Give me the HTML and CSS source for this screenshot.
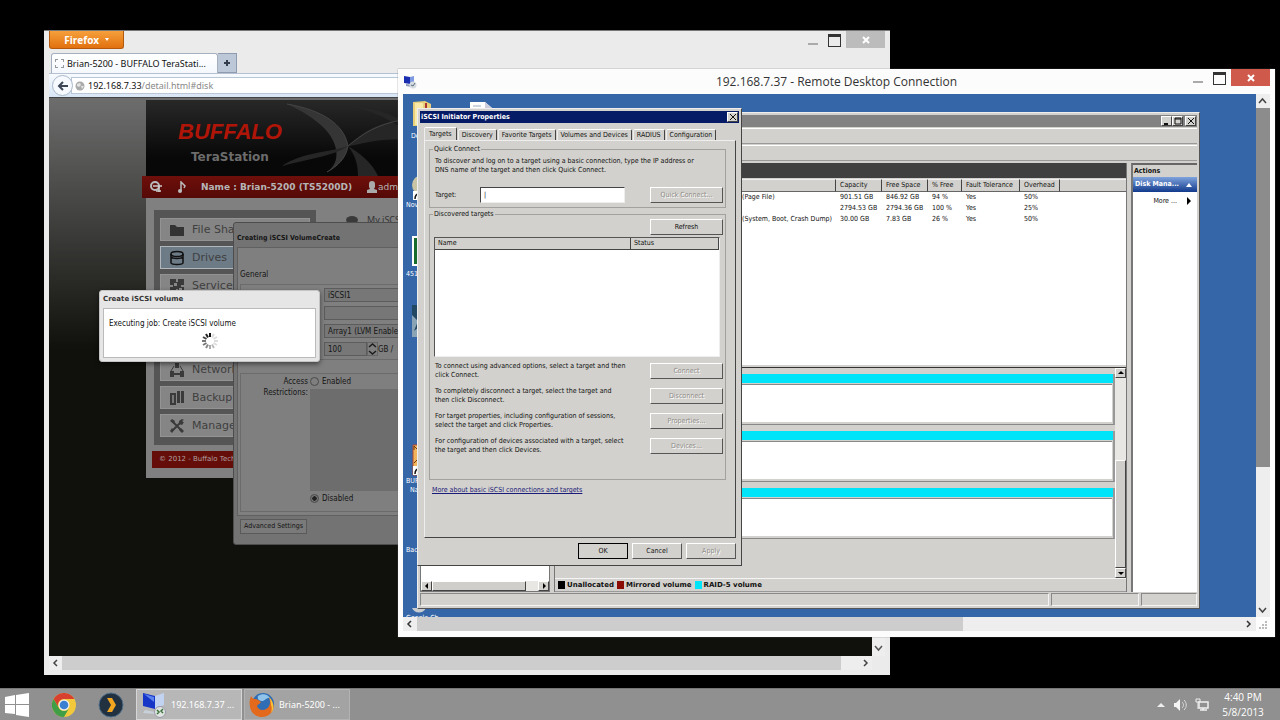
FILE: index.html
```html
<!DOCTYPE html>
<html lang="en">
<head>
    <meta charset="UTF-8">
    <title>Desktop</title>
    <link rel="stylesheet" href="styles.css">
</head>
<body>

<div class="desktop">

    <!-- firefox -->
    <div class="window firefox">
        <div class="ff_title">
            <button class="ff_menu">Firefox <span class="caret"></span></button>
            <div class="ff_controls">
                <button class="ctl ctl_min" aria-label="Minimize"></button>
                <button class="ctl ctl_max" aria-label="Maximize"></button>
                <button class="ctl ctl_close ctl_close_grey" aria-label="Close">
                    <svg width="8" height="8" viewBox="0 0 8 8"><path d="M1 1l6 6M7 1l-6 6" stroke="#fff" stroke-width="2"/></svg>
                </button>
            </div>
        </div>
        <div class="ff_tabs">
            <div class="ff_tab"><i class="ff_favicon"></i>Brian-5200 - BUFFALO TeraStati...</div>
            <button class="ff_newtab" aria-label="New tab">
                <svg width="8" height="8" viewBox="0 0 8 8"><path d="M4 1v6M1 4h6" stroke="#333c4c" stroke-width="2"/></svg>
            </button>
        </div>
        <div class="ff_nav">
            <button class="ff_back" aria-label="Back">
                <svg width="12" height="12" viewBox="0 0 12 12"><path d="M6 2L2 6l4 4M2 6h9" fill="none" stroke="#3c4656" stroke-width="2"/></svg>
            </button>
            <div class="ff_url">
                <svg width="10" height="10" viewBox="0 0 10 10"><circle cx="5" cy="5" r="4.500" fill="#aaa"/><path d="M2 3l3-1 1 2-2 2-2-1zM6 5l3 0-2 3z" fill="#e4e4e4"/></svg>
                <span>192.168.7.33<em>/detail.html#disk</em></span>
            </div>
        </div>

        <div class="ff_view">
            <div class="page">
                <div class="site">
                    <div class="site_head">
                        <svg class="site_swoosh" viewBox="0 0 120 76" preserveAspectRatio="none">
                            <path d="M5 4C40 10 62 24 66 46C64 58 56 66 45 72C60 62 56 42 42 28C32 18 18 10 5 4z" fill="#353535"/>
                            <path d="M66 46C80 34 90 24 120 20V40C98 38 82 44 66 46zM66 46C50 52 20 52 0 66C30 58 52 56 66 46zM60 5C90 10 104 18 120 28V20C100 10 80 6 60 5zM66 46C76 52 90 62 96 76H76C76 62 72 54 66 46z" fill="#262626"/>
                            <path d="M5 4C40 10 62 24 66 46C64 58 56 66 45 72M66 46C80 34 96 24 120 20" fill="none" stroke="#444"/>
                        </svg>
                        <div class="site_logo">BUFFALO</div>
                        <div class="site_model">TeraStation</div>
                    </div>
                    <div class="site_bar">
                        <svg width="14" height="12" viewBox="0 0 14 12"><circle cx="6" cy="5" r="4" fill="none" stroke="#bbb" stroke-width="2"/><path d="M4 5h9M10 5v6M7 10h5" stroke="#ccc" stroke-width="1.500"/></svg>
                        <svg width="10" height="12" viewBox="0 0 10 12"><path d="M4 10V1l4 4-1 2" fill="none" stroke="#bbb" stroke-width="1.500"/><circle cx="3" cy="10" r="2" fill="#bbb"/></svg>
                        <b>Name : Brian-5200 (TS5200D)</b>
                        <span class="site_user"><svg width="12" height="12" viewBox="0 0 12 12"><path d="M3 3a3 3 0 0 1 6 0v3l-1 2 3 1v3H1V9l3-1-1-2z" fill="#aaa"/></svg>admin</span>
                    </div>
                    <div class="site_body">
                        <div class="site_cols">
                            <div class="side">
                                <a href="#" class="side_item"><svg class="side_icon" viewBox="0 0 16 16"><path d="M1 3h5l2 2h7v9H1z" fill="#333"/></svg>File Sharing</a>
                                <a href="#" class="side_item current"><svg class="side_icon" viewBox="0 0 16 16"><g fill="none" stroke="#111" stroke-width="1.500"><ellipse cx="8" cy="4" rx="6" ry="2.500"/><path d="M2 4v9c1 2 11 2 12 0V4M2 7c2 2 10 2 12 0"/></g></svg>Drives</a>
                                <a href="#" class="side_item"><svg class="side_icon" viewBox="0 0 16 16"><path d="M1 1h6v3h2V1h6v6h-3v2h3v6H9v-4H7v4H1V9h3V7H1z" fill="#3a3a3a"/><path d="M5 5h3v3H5zM10 10h3v2h-3z" fill="#888"/></svg>Services</a>
                                <a href="#" class="side_item">Applications</a>
                                <a href="#" class="side_item">System</a>
                                <a href="#" class="side_item"><svg class="side_icon" viewBox="0 0 16 16"><path d="M6 1h4v5H6zM1 9h4v6H1zM11 9h4v6h-4zM5 11h6v2H5z" fill="#3a3a3a"/><path d="M5 4L2 9M11 4l3 5" stroke="#3a3a3a"/></svg>Network</a>
                                <a href="#" class="side_item"><svg class="side_icon" viewBox="0 0 16 16"><path d="M1 3h6v12H1zM8 1h3v12H8zM12 1h3v12h-3z" fill="#3a3a3a"/><path d="M3 5h2v8H3z" fill="#777"/></svg>Backup</a>
                                <a href="#" class="side_item"><svg class="side_icon" viewBox="0 0 16 16"><path d="M3 3l10 10M13 3L3 13" stroke="#3a3a3a" stroke-width="2"/><path d="M1 3l2-2 3 2-1 3zM10 3l3-2 2 1-2 1 1 1 1 0-2 3-3-1zM10 12l2-2 3 3-2 2zM1 13l2-3 2 2-2 3z" fill="#3a3a3a"/></svg>Management</a>
                            </div>
                            <div class="site_main"><svg width="14" height="10" viewBox="0 0 14 10"><ellipse cx="7" cy="5" rx="6" ry="4" fill="#3a3a3a"/></svg>My iSCSI</div>
                        </div>
                        <div class="site_foot">© 2012 - Buffalo Technology</div>
                    </div>
                </div>

                <form class="volume">
                    <div class="volume_title">Creating iSCSI VolumeCreate</div>
                    <div class="volume_body">
                        <div class="volume_general">General</div>
                        <div class="volume_set volume_fields">
                            <input type="text" class="vfield" value="iSCSI1" aria-label="Name">
                            <input type="text" class="vfield" aria-label="Description">
                            <select class="vfield" aria-label="Volume"><option>Array1 (LVM Enabled)</option></select>
                            <div class="volume_size">
                                <input type="text" class="vfield vfield_num" value="100" aria-label="Size">
                                <span class="spin"><svg width="9" height="12" viewBox="0 0 9 12"><path d="M1 4l3.500-3L8 4M1 8l3.500 3L8 8" fill="none" stroke="#1c1c1c" stroke-width="1.500"/></svg></span>
                                GB /
                            </div>
                        </div>
                        <div class="volume_set volume_access">
                            <div class="access_label">Access<br>Restrictions:</div>
                            <div class="access_opts">
                                <label><input type="radio" name="access">Enabled</label>
                                <div class="access_off"></div>
                                <label><input type="radio" name="access" checked>Disabled</label>
                            </div>
                        </div>
                    </div>
                    <div class="volume_foot"><button type="button" class="volume_adv">Advanced Settings</button></div>
                </form>
                <div class="job">
                    <div class="job_title">Create iSCSI volume</div>
                    <div class="job_body">
                        Executing job: Create iSCSI volume
                        <svg class="job_spin" width="18" height="18" viewBox="0 0 18 18" stroke-width="2">
                            <path d="M9 1v4" stroke="#111"/>
                            <path d="M5 2l2 3.500" stroke="#222"/>
                            <path d="M2 5l3.500 2" stroke="#444"/>
                            <path d="M1 9h4" stroke="#777"/>
                            <path d="M2 13l3.500-2" stroke="#777"/>
                            <path d="M5 16l2-3.500" stroke="#888"/>
                            <path d="M9 17v-4" stroke="#aaa"/>
                            <path d="M13 16l-2-3.500" stroke="#bbb"/>
                            <path d="M16 13l-3.500-2M17 9h-4M16 5l-3.500 2M13 2l-2 3.500" stroke="#ddd"/>
                        </svg>
                    </div>
                </div>
            </div>
            <div class="vbar">
                <svg width="13" height="16" viewBox="0 0 13 16"><path d="M3 6l3.500 4L10 6" fill="none" stroke="#555" stroke-width="1.500"/></svg>
            </div>
            <div class="hbar">
                <svg width="13" height="12" viewBox="0 0 13 12"><path d="M8 3L5 6l3 3" fill="none" stroke="#444" stroke-width="1.500"/></svg>
                <div class="hbar_thumb"></div>
                <svg width="13" height="12" viewBox="0 0 13 12"><path d="M5 3l3 3-3 3" fill="none" stroke="#444" stroke-width="1.500"/></svg>
            </div>
        </div>
    </div>

    <!-- remote desktop -->
    <div class="window rdp">
        <div class="rdp_title">
            <svg width="14" height="14" viewBox="0 0 14 14"><path d="M1 1l6 1v7L1 8z" fill="#1a2fb0"/><path d="M7 2l4-1v7l-4 1z" fill="#7f9ae0"/><path d="M3 9l6 1v2l-6-1z" fill="#8d99b5"/><circle cx="10" cy="10" r="3.500" fill="#d5dbe2"/><path d="M8 10l2 1 2-3" fill="none" stroke="#5b6a79"/></svg>
            <span>192.168.7.37 - Remote Desktop Connection</span>
            <div class="ff_controls">
                <button class="ctl ctl_min" aria-label="Minimize"></button>
                <button class="ctl ctl_max" aria-label="Maximize"></button>
                <button class="ctl ctl_close" aria-label="Close">
                    <svg width="8" height="8" viewBox="0 0 8 8"><path d="M1 1l6 6M7 1l-6 6" stroke="#fff" stroke-width="2"/></svg>
                </button>
            </div>
        </div>
        <div class="rdp_view">
            <div class="remote">
                <div class="dicon dicon_docs"><svg width="20" height="28" viewBox="0 0 20 28"><path d="M1 2l12-1 6 3v22H1z" fill="#e8cf7a"/><path d="M3 3h8v22H3z" fill="#f8eaa8"/><path d="M13 3h2v10h-2z" fill="#a33"/></svg><span>De</span></div>
                <div class="dicon dicon_file"><svg width="24" height="28" viewBox="0 0 24 28"><path d="M1 1h15l7 6v20H1z" fill="#fff"/><path d="M16 1v6h7" fill="#ccd"/><path d="M4 5h8M4 8h12" stroke="#9ab"/></svg></div>
                <div class="dicon dicon_nov"><svg width="20" height="28" viewBox="0 0 20 28"><circle cx="10" cy="12" r="10" fill="#c9c4a4"/><circle cx="10" cy="12" r="3" fill="#889"/><path d="M1 18h9v9H1z" fill="#fff"/><path d="M3 26c0-4 2-5 4-5v-2" fill="none" stroke="#111" stroke-width="1.500"/></svg><span>Nov</span></div>
                <div class="dicon dicon_451"><svg width="24" height="30" viewBox="0 0 24 30"><path d="M1 1h22v28H1z" fill="#176b2b" stroke="#fff" stroke-width="2"/></svg><span>451</span></div>
                <div class="dicon dicon_pic"><svg width="24" height="32" viewBox="0 0 24 32"><path d="M0 0h24v32H0z" fill="#234863"/><path d="M0 10l6 6-4 10 10-8v14H0z" fill="#8aa3b5"/></svg></div>
                <div class="dicon dicon_nas"><svg width="24" height="32" viewBox="0 0 24 32"><path d="M1 1h22v30H1z" fill="#f0b45c" stroke="#b3482c"/><path d="M2 6V2l4 4V2M2 19l5-5" fill="none" stroke="#6b3a14"/><path d="M1 22h9v9H1z" fill="#fff"/><path d="M3 30c0-4 2-5 4-5v-2" fill="none" stroke="#111" stroke-width="1.500"/></svg><span>BUFFALO<br>&nbsp; Na</span></div>
                <div class="dicon dicon_bac"><span>Bac</span></div>
                <div class="dicon dicon_goo"><svg width="14" height="6" viewBox="0 0 14 6"><path d="M0 0h14c-3 6-11 6-14 0z" fill="#c8ccd0"/></svg><span>Google Ch</span></div>

                <!-- disk management -->
                <div class="mmc">
                    <div class="mmc_title">
                        <button class="cbtn" aria-label="Minimize"><svg width="8" height="8" viewBox="0 0 8 8"><path d="M1 7h4" stroke="#111" stroke-width="2"/></svg></button>
                        <button class="cbtn" aria-label="Maximize"><svg width="8" height="8" viewBox="0 0 8 8"><path d="M1 1h6v6H1zM1 2h6" fill="none" stroke="#111"/></svg></button>
                        <button class="cbtn cbtn_gap" aria-label="Close"><svg width="8" height="8" viewBox="0 0 8 8"><path d="M1 1l6 6M7 1L1 7" stroke="#111"/></svg></button>
                    </div>
                    <div class="mmc_bar"></div>
                    <div class="mmc_bar"></div>
                    <div class="mmc_main">
                        <div class="mmc_tree">
                            <div class="mmc_tree_list"></div>
                            <div class="cbar">
                                <button class="cbtn" aria-label="Scroll left"><svg width="6" height="6" viewBox="0 0 6 6"><path d="M4 0v6L1 3z"/></svg></button>
                                <div class="cbar_thumb"></div>
                                <button class="cbtn" aria-label="Scroll right"><svg width="6" height="6" viewBox="0 0 6 6"><path d="M2 0v6l3-3z"/></svg></button>
                            </div>
                        </div>
                        <div class="mmc_center">
                            <div class="mmc_band"></div>
                            <div class="mmc_volumes">
                                <table class="vols">
                                    <colgroup><col class="c_vol"><col class="c_stat"><col class="c_cap"><col class="c_free"><col class="c_pct"><col class="c_fault"><col class="c_over"><col></colgroup>
                                    <thead><tr><th></th><th></th><th>Capacity</th><th>Free Space</th><th>% Free</th><th>Fault Tolerance</th><th>Overhead</th><th></th></tr></thead>
                                    <tbody>
                                        <tr><td></td><td>(Page File)</td><td>901.51 GB</td><td>846.92 GB</td><td>94 %</td><td>Yes</td><td>50%</td><td></td></tr>
                                        <tr><td></td><td></td><td>2794.53 GB</td><td>2794.36 GB</td><td>100 %</td><td>Yes</td><td>25%</td><td></td></tr>
                                        <tr><td></td><td>(System, Boot, Crash Dump)</td><td>30.00 GB</td><td>7.83 GB</td><td>26 %</td><td>Yes</td><td>50%</td><td></td></tr>
                                    </tbody>
                                </table>
                            </div>
                            <div class="mmc_graph">
                                <div class="disks">
                                    <div class="disk"><div class="disk_color"></div><div class="disk_part"></div></div>
                                    <div class="disk"><div class="disk_color"></div><div class="disk_part"></div></div>
                                    <div class="disk"><div class="disk_color"></div><div class="disk_part"></div></div>
                                </div>
                                <div class="cvbar">
                                    <button class="cbtn" aria-label="Scroll up"><svg width="6" height="6" viewBox="0 0 6 6"><path d="M0 4h6L3 1z"/></svg></button>
                                    <div class="cvbar_thumb"></div>
                                    <button class="cbtn" aria-label="Scroll down"><svg width="6" height="6" viewBox="0 0 6 6"><path d="M0 2h6L3 5z"/></svg></button>
                                </div>
                            </div>
                            <div class="legend">
                                <span><i class="sw sw_un"></i>Unallocated</span>
                                <span><i class="sw sw_mir"></i>Mirrored volume</span>
                                <span><i class="sw sw_raid"></i>RAID-5 volume</span>
                            </div>
                        </div>
                        <div class="mmc_actions">
                            <div class="act_head">Actions</div>
                            <div class="act_group">Disk Mana... <svg width="6" height="4" viewBox="0 0 6 4"><path d="M0 4h6L3 0z" fill="#fff"/></svg></div>
                            <a href="#" class="act_item">More ... <svg width="4" height="8" viewBox="0 0 4 8"><path d="M0 0v8l4-4z"/></svg></a>
                        </div>
                    </div>
                    <div class="mmc_status"><div></div><div></div><div></div></div>
                </div>

                <!-- iscsi initiator -->
                <div class="iscsi">
                    <div class="iscsi_title">iSCSI Initiator Properties
                        <button class="cbtn" aria-label="Close"><svg width="8" height="8" viewBox="0 0 8 8"><path d="M1 1l6 6M7 1L1 7" stroke="#111"/></svg></button>
                    </div>
                    <div class="tabs">
                        <button class="tab tab_on">Targets</button>
                        <button class="tab">Discovery</button>
                        <button class="tab">Favorite Targets</button>
                        <button class="tab">Volumes and Devices</button>
                        <button class="tab">RADIUS</button>
                        <button class="tab">Configuration</button>
                    </div>
                    <div class="panel">
                        <fieldset class="group group_quick">
                            <legend>Quick Connect</legend>
                            <p>To discover and log on to a target using a basic connection, type the IP address or<br>DNS name of the target and then click Quick Connect.</p>
                            <div class="target_row">
                                <label for="target">Target:</label>
                                <input type="text" id="target" value="|">
                                <button class="btn" disabled>Quick Connect...</button>
                            </div>
                        </fieldset>
                        <fieldset class="group group_found">
                            <legend>Discovered targets</legend>
                            <button class="btn btn_refresh">Refresh</button>
                            <div class="found">
                                <table>
                                    <thead><tr><th class="found_name">Name</th><th>Status</th></tr></thead>
                                </table>
                            </div>
                            <div class="act_rows">
                                <div class="act_row"><p>To connect using advanced options, select a target and then<br>click Connect.</p><button class="btn" disabled>Connect</button></div>
                                <div class="act_row"><p>To completely disconnect a target, select the target and<br>then click Disconnect.</p><button class="btn" disabled>Disconnect</button></div>
                                <div class="act_row"><p>For target properties, including configuration of sessions,<br>select the target and click Properties.</p><button class="btn" disabled>Properties...</button></div>
                                <div class="act_row"><p>For configuration of devices associated with a target, select<br>the target and then click Devices.</p><button class="btn" disabled>Devices...</button></div>
                            </div>
                        </fieldset>
                        <a href="#" class="more">More about basic iSCSI connections and targets</a>
                    </div>
                    <div class="iscsi_foot">
                        <button class="btn btn_ok">OK</button>
                        <button class="btn">Cancel</button>
                        <button class="btn" disabled>Apply</button>
                    </div>
                </div>
            </div>
            <div class="vbar">
                <svg width="13" height="14" viewBox="0 0 13 14"><path d="M3 9l3.500-4L10 9" fill="none" stroke="#444" stroke-width="1.500"/></svg>
                <div class="vbar_thumb"></div>
                <svg width="13" height="14" viewBox="0 0 13 14"><path d="M3 5l3.500 4L10 5" fill="none" stroke="#444" stroke-width="1.500"/></svg>
            </div>
            <div class="hbar">
                <svg width="14" height="14" viewBox="0 0 14 14"><path d="M8 4L5 7l3 3" fill="none" stroke="#333" stroke-width="1.500"/></svg>
                <div class="hbar_thumb"></div>
                <svg width="14" height="14" viewBox="0 0 14 14"><path d="M5 4l3 3-3 3" fill="none" stroke="#333" stroke-width="1.500"/></svg>
            </div>
            <svg class="grip" width="13" height="14" viewBox="0 0 13 14"><path d="M9 4h2v2H9zM6 7h2v2H6zM9 7h2v2H9zM3 10h2v2H3zM6 10h2v2H6zM9 10h2v2H9z" fill="#bbb"/></svg>
        </div>
    </div>
</div>

<div class="taskbar">
    <div class="launch">
        <button class="task_icon" aria-label="Start">
            <svg width="24" height="24" viewBox="0 0 24 24"><path d="M0 4l10-2v9H0zM11 2l13-2v11H11zM0 12h10v9L0 20zM11 12h13v12l-13-2z" fill="#fff"/></svg>
        </button>
        <button class="task_icon" aria-label="Chrome">
            <svg width="24" height="24" viewBox="0 0 24 24"><circle cx="12" cy="12" r="12" fill="#f3c93c"/><path d="M1.600 6A12 12 0 0 1 22.400 6H12a6 6 0 0 0-5.200 9z" fill="#d8402f"/><path d="M1.600 6A12 12 0 0 0 12 24l5.200-9A6 6 0 0 1 6.800 15z" fill="#3f9e46"/><circle cx="12" cy="12" r="5.500" fill="#eee"/><circle cx="12" cy="12" r="4.300" fill="#3b7fd0"/></svg>
        </button>
        <button class="task_icon" aria-label="Plex">
            <svg width="26" height="26" viewBox="0 0 26 26"><circle cx="13" cy="13" r="12" fill="#223140" stroke="#4f6f8c"/><path d="M9 6h5l4 7-4 7H9l4-7z" fill="#f2a51e"/></svg>
        </button>
    </div>
    <button class="task task_on">
        <svg width="26" height="26" viewBox="0 0 26 26"><path d="M2 1l12 3v13L2 14z" fill="#1736c8"/><path d="M14 4l9-3v12l-9 4z" fill="#c2d3f2"/><path d="M3 2l10 3v5z" fill="#5c83ee"/><path d="M4 18l10 2v2L2 21z" fill="#c8d0da"/><circle cx="19" cy="20" r="5.500" fill="#dfe4e0" stroke="#99a"/><path d="M16 18l2 2-2 2M22 17l-2 2 2 2" fill="none" stroke="#39703a" stroke-width="1.500"/></svg>
        <span>192.168.7.37 ...</span>
    </button>
    <button class="task">
        <svg width="26" height="26" viewBox="0 0 26 26"><circle cx="14" cy="12" r="11" fill="#2f6db5"/><path d="M9 4c4-3 10-2 12 2-3-1-4 2-7 3-4 0-6-2-5-5z" fill="#8fc3ea"/><path d="M2 4c1 2 2 3 4 3 3 0 4 2 6 3-1 2-3 2-4 4 1 4 6 5 9 3 4-2 5-7 3-12 5 5 6 12 2 16-5 6-15 5-19-1-3-5-3-11-1-16z" fill="#e36a1c"/><path d="M20 5c5 5 6 12 2 16 1-3 1-6 0-8 0-3-1-5-2-8z" fill="#f7c23a"/></svg>
        <span>Brian-5200 - ...</span>
    </button>
    <div class="tray">
        <svg width="8" height="5" viewBox="0 0 8 5"><path d="M0 5h8L4 1z" fill="#eee"/></svg>
        <svg width="14" height="14" viewBox="0 0 14 14"><path d="M1 5h2l4-4v12L3 9H1z" fill="#f5f5f5"/><path d="M9 4c2 2 2 4 0 6M11 2c3 3 3 7 0 10" fill="none" stroke="#ddd"/></svg>
        <svg width="14" height="14" viewBox="0 0 14 14"><path d="M4 4h9v6H4zM5 12h7M8 10v2" fill="none" stroke="#eee" stroke-width="1.500"/><path d="M1 1h4v3H1zM3 4v7" fill="none" stroke="#eee"/></svg>
        <div class="clock">4:40 PM<br>5/8/2013</div>
    </div>
</div>

</body>
</html>
```
FILE: styles.css
```css
*{
    margin: 0;
    padding: 0;
    box-sizing: border-box;
}
body{
    height: 100vh;
    background: #000;
    overflow: hidden;
    display: flex;
    flex-direction: column;
    font: 7px/9px "DejaVu Sans Condensed", "DejaVu Sans", sans-serif;
    color: #111;
}
button, input, select{
    font: inherit;
    color: inherit;
    border: 0;
    background: none;
}
svg{
    flex: none;
    display: block;
}
a{
    color: inherit;
    text-decoration: none;
}
.desktop{
    flex: 1;
    position: relative;
    min-height: 0;
}
.window{
    position: absolute;
    display: flex;
    flex-direction: column;
}

/* window controls */
.ff_controls{
    margin-left: auto;
    display: flex;
    align-items: flex-start;
    gap: 3px;
}
.ctl{
    width: 18px;
    height: 18px;
    display: flex;
    align-items: center;
    justify-content: center;
}
.ctl_min::before{
    content: "";
    width: 10px;
    height: 2px;
    margin-top: 8px;
    background: #aaa;
}
.ctl_max::before{
    content: "";
    width: 11px;
    height: 9px;
    border: 1px solid #333;
    border-top-width: 3px;
}
.ctl_close{
    width: 39px;
    height: 17px;
    background: #cf5a4c;
}
.ctl_close_grey{
    background: #bcbcbc;
}

/* firefox */
.firefox{
    left: 44px;
    top: 30px;
    right: 390px;
    bottom: 13px;
    padding: 0 5px 5px;
    background: #ebebeb;
    border-top: 1px solid #777;
    font-family: "Noto Sans", sans-serif;
}
.ff_title{
    display: flex;
    height: 22px;
}
.ff_menu{
    width: 75px;
    height: 18px;
    background: linear-gradient(#f5a03c, #e2710f);
    border: 1px solid #b4590b;
    border-top: 0;
    border-radius: 0 0 3px 3px;
    color: #fff;
    font: bold 10px/16px "Open Sans", sans-serif;
}
.caret{
    display: inline-block;
    margin: 0 0 3px 3px;
    border: 2px solid transparent;
    border-top: 3px solid #fff;
    border-bottom: 0;
}
.ff_tabs{
    display: flex;
    height: 20px;
    padding-left: 2px;
}
.ff_tab{
    width: 167px;
    display: flex;
    align-items: center;
    gap: 3px;
    padding-left: 3px;
    background: linear-gradient(#fff, #f4f8fd);
    border: 1px solid #a5b0bf;
    border-bottom: 0;
    border-radius: 3px 3px 0 0;
    font-size: 9px;
    white-space: nowrap;
}
.ff_favicon{
    width: 9px;
    height: 9px;
    border: 1px dashed #999;
}
.ff_newtab{
    width: 19px;
    display: flex;
    align-items: center;
    justify-content: center;
    background: #bcc8d8;
    border: 1px solid #8f9cb0;
    border-left: 0;
}
.ff_nav{
    height: 24px;
    display: flex;
    align-items: center;
    background: linear-gradient(#f7fbff, #d8e5f5);
    border-top: 1px solid #b5c0d0;
    padding-left: 3px;
}
.ff_back{
    width: 21px;
    height: 21px;
    display: flex;
    align-items: center;
    justify-content: center;
    border: 1px solid #a9b7c9;
    border-radius: 50%;
    background: #f6faff;
    z-index: 1;
}
.ff_url{
    flex: 1;
    display: flex;
    align-items: center;
    gap: 3px;
    height: 17px;
    margin-left: -2px;
    padding-left: 3px;
    background: #fff;
    border: 1px solid #b9c6d6;
    font-size: 9px;
}
.ff_url em{
    color: #888;
    font-style: normal;
}
.ff_view{
    flex: 1;
    min-height: 0;
    display: grid;
    grid-template: 1fr 14px / 1fr 13px;
    border-top: 1px solid #444;
}
.vbar{
    background: #eee;
    display: flex;
    flex-direction: column;
    justify-content: flex-end;
}
.hbar{
    display: flex;
    align-items: center;
    background: #eee;
}
.hbar_thumb{
    width: 779px;
    height: 100%;
    background: #cdcdcd;
    margin-right: auto;
}

/* terastation page */
.page{
    position: relative;
    overflow: hidden;
    padding: 2px 0 0 93px;
    background: linear-gradient(#6d6d6d, #10110c 45%);
}
.site_head{
    height: 76px;
    margin-left: 4px;
    padding: 18px 0 0 32px;
    background: linear-gradient(#282828, #080808 75%);
    position: relative;
}
.site_swoosh{
    position: absolute;
    left: 136px;
    top: 0;
    width: 120px;
    height: 76px;
}
.site_logo{
    font: italic bold 22px/28px "Liberation Sans", Arial, sans-serif;
    color: #b01508;
}
.site_model{
    padding-left: 13px;
    font: bold 12px/22px "DejaVu Sans", sans-serif;
    color: #6c6c6c;
}
.site_bar{
    height: 22px;
    display: flex;
    align-items: center;
    padding-left: 7px;
    gap: 14px;
    background: linear-gradient(#6f0f0b, #540a07);
    font-family: "DejaVu Sans", sans-serif;
    font-size: 9px;
    color: #b5b5b5;
}
.site_user{
    display: flex;
    align-items: center;
}
.site_body{
    margin-left: 4px;
    padding: 12px 0 10px 6px;
    background: #808080;
}
.site_cols{
    display: flex;
    gap: 29px;
    padding-left: 2px;
}
.side{
    width: 162px;
    padding: 8px 6px;
    display: flex;
    flex-direction: column;
    gap: 5px;
    background: #555;
}
.side_item{
    height: 23px;
    display: flex;
    align-items: center;
    gap: 7px;
    padding-left: 8px;
    background: #858585;
    border: 1px solid #939393;
    font: 11px/20px "DejaVu Sans", sans-serif;
    color: #3f3f3f;
    white-space: nowrap;
}
.side_item.current{
    background: #6d7b87;
    border: 1px solid #b0b6bc;
}
.side_icon{
    width: 16px;
    height: 16px;
}
.site_main{
    display: flex;
    gap: 8px;
    padding-top: 5px;
    font-size: 9px;
    color: #333;
}
.site_foot{
    height: 17px;
    margin-top: 6px;
    padding-left: 7px;
    background: #640d09;
    color: #b0a0a0;
    line-height: 17px;
    font-size: 7px;
    font-family: "DejaVu Sans", sans-serif;
}

.volume{
    position: absolute;
    left: 184px;
    top: 124px;
    width: 420px;
    padding: 0 3px;
    border: 1px solid #4d4d4d;
    border-radius: 3px;
    background: #737373;
    font: 8px/11px "DejaVu Sans Condensed", "DejaVu Sans", sans-serif;
    color: #151515;
}
.volume_title{
    height: 24px;
    padding-top: 10px;
    font-size: 7px;
    font-weight: bold;
}
.volume_body{
    padding: 0 2px 3px;
    background: #7f7f7f;
    border: 1px solid #606060;
}
.volume_general{
    height: 36px;
    padding-top: 21px;
}
.volume_set{
    border: 1px solid #6b6b6b;
}
.volume_fields{
    height: 76px;
    padding: 3px 0 0 83px;
    display: flex;
    flex-direction: column;
    gap: 4px;
}
.vfield{
    width: 250px;
    height: 14px;
    padding: 0 3px;
    border: 1px solid #5c5c5c;
    background: #777;
    appearance: none;
}
.vfield_num{
    width: 43px;
}
.volume_size{
    display: flex;
    align-items: center;
}
.spin{
    border: 1px solid #666;
}
.volume_access{
    height: 139px;
    margin-top: 13px;
    display: flex;
    gap: 2px;
}
.access_label{
    width: 67px;
    padding-top: 2px;
    text-align: right;
}
.access_opts label{
    display: flex;
    align-items: center;
    gap: 3px;
    height: 15px;
}
.access_opts input{
    width: 9px;
    height: 9px;
    appearance: none;
    border: 1px solid #4a4a4a;
    border-radius: 50%;
}
.access_opts input:checked{
    background: radial-gradient(#222 40%, #777 50%);
}
.access_off{
    width: 260px;
    height: 102px;
    background: #6d6d6d;
}
.volume_foot{
    padding: 3px 3px 10px;
}
.volume_adv{
    width: 67px;
    height: 15px;
    border: 1px solid #5a5a5a;
    background: #7a7a7a;
    font-size: 7px;
    line-height: 9px;
    white-space: nowrap;
}

.job{
    position: absolute;
    left: 50px;
    top: 192px;
    width: 221px;
    padding: 0 3px 3px;
    background: #e6e6e6;
    border: 1px solid #c4c4c4;
    border-radius: 3px;
    box-shadow: 0 2px 5px rgba(0,0,0,0.5);
}
.job_title{
    font: bold 7px/17px "DejaVu Sans", sans-serif;
    color: #333;
}
.job_body{
    height: 50px;
    padding: 8px 5px;
    background: #fff;
    border: 1px solid #bbb;
    font: 8px/13px "DejaVu Sans Condensed", "DejaVu Sans", sans-serif;
}
.job_spin{
    margin: 2px auto 0;
}

/* remote desktop */
.rdp{
    left: 398px;
    top: 69px;
    right: 5px;
    bottom: 51px;
    padding: 0 5px 6px;
    background: #fcfcfc;
    box-shadow: 0 0 1px #666;
}
.rdp_title{
    height: 25px;
    display: grid;
    grid-template-columns: 1fr auto 1fr;
    align-items: center;
    font: 12px/24px "Open Sans", sans-serif;
    color: #333;
}
.rdp_title .ff_controls{
    align-self: start;
}
.rdp_view{
    flex: 1;
    min-height: 0;
    display: grid;
    grid-template: 1fr 14px / 1fr 14px;
}
.vbar_thumb{
    height: 359px;
    background: #8c8c8c;
    margin-bottom: auto;
}
.rdp .hbar_thumb{
    width: 546px;
}
.remote{
    position: relative;
    overflow: hidden;
    background: #3567a8;
}
.dicon{
    position: absolute;
    left: 3px;
    color: #fff;
    line-height: 9px;
    white-space: nowrap;
}
.dicon svg{
    margin-left: 6px;
}
.dicon_docs{
    top: 6px;
}
.dicon_docs span{
    display: block;
    padding: 4px 0 0 5px;
}
.dicon_file{
    left: 60px;
    top: 7px;
}
.dicon_nov{
    top: 79px;
}
.dicon_451{
    top: 142px;
}
.dicon_451 span{
    display: block;
    padding-top: 4px;
}
.dicon_pic{
    top: 211px;
}
.dicon_nas{
    top: 350px;
}
.dicon_nas span{
    display: block;
    padding-top: 1px;
}
.dicon_bac{
    top: 452px;
}
.dicon_goo{
    top: 514px;
}

/* classic buttons */
.cbtn{
    width: 11px;
    height: 10px;
    display: flex;
    align-items: center;
    justify-content: center;
    background: #d4d2ce;
    border: 1px solid;
    border-color: #fff #444 #444 #fff;
}
.cbtn_gap{
    margin-left: 2px;
}

.mmc{
    position: absolute;
    left: 14px;
    top: 18px;
    right: 56px;
    bottom: 8px;
    padding: 2px;
    display: flex;
    flex-direction: column;
    background: #d3d1cd;
    border: 1px solid;
    border-color: #eee #555 #555 #eee;
}
.mmc_title{
    height: 12px;
    display: flex;
    align-items: center;
    justify-content: flex-end;
    padding-right: 1px;
    background: #828282;
}
.mmc_bar{
    height: 16px;
    margin-top: 1px;
    border-top: 1px solid #fff;
    border-bottom: 1px solid #999;
}
.mmc_main{
    flex: 1;
    min-height: 0;
    display: grid;
    grid-template-columns: 130px 1fr 66px;
    gap: 4px;
    margin-top: 2px;
}
.mmc_tree{
    display: flex;
    flex-direction: column;
    border: 1px solid #777;
}
.mmc_tree_list{
    flex: 1;
    background: #fff;
}
.cbar{
    display: flex;
    background: #e8e7e4;
}
.cbar_thumb{
    width: 94px;
    margin-right: auto;
    background: #d0cecb;
    border: 1px solid;
    border-color: #fff #444 #444 #fff;
}
.mmc_center{
    display: flex;
    flex-direction: column;
    border-left: 1px solid #777;
    border-right: 1px solid #777;
    min-width: 0;
    min-height: 0;
}
.mmc_band{
    height: 15px;
    background: #404040;
}
.mmc_volumes{
    height: 186px;
    margin-top: 1px;
    background: #fff;
}
.vols{
    width: 100%;
    table-layout: fixed;
    border-collapse: separate;
    border-spacing: 0;
}
.vols th{
    height: 13px;
    padding: 0 4px;
    background: #d3d1cd;
    border-right: 1px solid #444;
    border-bottom: 1px solid #666;
    border-top: 1px solid #eee;
    font-weight: normal;
    text-align: left;
    white-space: nowrap;
}
.vols th:last-child{
    border-right: 0;
}
.vols td{
    height: 11px;
    padding: 0 0 0 4px;
    white-space: nowrap;
}
.vols th:nth-child(2),
.vols td:nth-child(2){
    padding: 0;
}
.c_vol{
    width: 187px;
}
.c_stat{
    width: 94px;
}
.c_cap,
.c_free{
    width: 46px;
}
.c_pct{
    width: 34px;
}
.c_fault{
    width: 58px;
}
.c_over{
    width: 40px;
}
.mmc_graph{
    flex: 1;
    min-height: 0;
    display: flex;
    margin-top: 2px;
    border-top: 1px solid #333;
    border-bottom: 1px solid #f4f4f4;
}
.disks{
    flex: 1;
    padding-top: 6px;
    display: flex;
    flex-direction: column;
    gap: 6px;
}
.disk{
    height: 51px;
    border-right: 2px solid #999;
    border-bottom: 1px solid #888;
    display: flex;
    flex-direction: column;
    padding-bottom: 2px;
}
.disk_color{
    height: 9px;
    background: #00e4fa;
}
.disk_part{
    flex: 1;
    margin: 1px 1px 0 0;
    border-top: 1px solid #888;
    background: #fff;
}
.cvbar{
    width: 11px;
    display: flex;
    flex-direction: column;
    background: #e8e7e4;
}
.cvbar_thumb{
    height: 108px;
    margin-top: auto;
    background: #d0cecb;
    border: 1px solid;
    border-color: #fff #444 #444 #fff;
}
.legend{
    height: 13px;
    display: flex;
    align-items: center;
    gap: 3px;
    padding-left: 3px;
    border-bottom: 1px solid #999;
    font-family: "DejaVu Sans", sans-serif;
    font-weight: bold;
}
.legend span{
    display: flex;
    align-items: center;
    gap: 2px;
}
.sw{
    width: 7px;
    height: 8px;
}
.sw_un{
    background: #000;
}
.sw_mir{
    background: #8b0b05;
}
.sw_raid{
    background: #00e4fa;
}
.mmc_actions{
    background: #fff;
    border-top: 2px solid #666;
    border-left: 2px solid #777;
}
.act_head{
    height: 12px;
    padding-left: 1px;
    background: #d3d1cd;
    font-weight: bold;
    line-height: 12px;
}
.act_group{
    height: 15px;
    display: flex;
    align-items: center;
    justify-content: space-between;
    padding: 0 5px 0 2px;
    background: linear-gradient(#7ea3dd, #123a8c);
    color: #fff;
    font-weight: bold;
}
.act_item{
    height: 18px;
    display: flex;
    align-items: center;
    justify-content: flex-end;
    gap: 10px;
    padding-right: 6px;
}
.mmc_status{
    height: 13px;
    display: grid;
    grid-template-columns: 1fr 88px 56px;
    gap: 2px;
    margin-top: 1px;
}
.mmc_status div{
    border: 1px solid;
    border-color: #888 #f4f4f4 #f4f4f4 #888;
}

/* iscsi initiator */
.iscsi{
    position: absolute;
    left: 14px;
    top: 14px;
    width: 325px;
    padding: 2px;
    background: #d3d1cd;
    border: 1px solid;
    border-color: #eee #444 #444 #eee;
}
.iscsi_title{
    height: 12px;
    display: flex;
    align-items: center;
    justify-content: space-between;
    padding: 0 1px;
    background: #061b66;
    color: #fff;
    font-weight: bold;
}
.tabs{
    display: flex;
    align-items: flex-end;
    padding: 4px 4px 0;
}
.tab{
    height: 11px;
    margin-right: 1px;
    padding: 0 3px;
    border: 1px solid;
    border-color: #fff #444 transparent #eee;
    border-bottom: 0;
    border-radius: 2px 2px 0 0;
}
.tab_on{
    height: 13px;
    padding: 0 4px;
}
.panel{
    height: 398px;
    margin: 0 3px 0 4px;
    padding: 4px 9px 0 4px;
    border: 1px solid;
    border-color: #eee #444 #444 #eee;
}
.group{
    border: 1px solid #a3a19d;
    padding: 0 2px 0 5px;
}
.group legend{
    margin-left: -2px;
    padding: 0 1px;
}
.group_quick{
    height: 63px;
}
.group_quick p{
    padding-top: 3px;
    white-space: nowrap;
}
.target_row{
    display: flex;
    align-items: center;
    margin-top: 12px;
}
.target_row label{
    width: 45px;
}
.target_row input{
    width: 145px;
    height: 16px;
    padding: 0 3px;
    background: #fff;
    border: 1px solid;
    border-color: #444 #eee #eee #444;
}
.btn{
    width: 73px;
    height: 16px;
    margin-left: auto;
    background: #d3d1cd;
    border: 1px solid;
    border-color: #fff #555 #555 #fff;
}
.btn:disabled{
    color: #8e8c88;
    text-shadow: 1px 1px 0 #fff;
}
.group_found{
    height: 270px;
    margin-top: 2px;
}
.btn_refresh{
    display: block;
}
.found{
    width: 286px;
    height: 120px;
    margin: 2px 0 0 -1px;
    background: #fff;
    border: 1px solid;
    border-color: #555 #eee #eee #555;
}
.found table{
    width: 100%;
    border-spacing: 0;
}
.found th{
    height: 12px;
    padding-left: 3px;
    background: #d3d1cd;
    border-right: 1px solid #444;
    border-bottom: 1px solid #444;
    font-weight: normal;
    text-align: left;
}
.found .found_name{
    width: 196px;
}
.act_rows{
    padding-top: 5px;
    display: flex;
    flex-direction: column;
    gap: 7px;
}
.act_row{
    display: flex;
    align-items: center;
}
.more{
    display: inline-block;
    margin: 6px 0 0 3px;
    color: #1b1b78;
    text-decoration: underline;
}
.iscsi_foot{
    display: flex;
    justify-content: flex-end;
    gap: 4px;
    padding: 5px 3px 4px;
}
.iscsi_foot .btn{
    width: 50px;
    margin: 0;
}
.iscsi_foot .btn_ok{
    border: 1px solid #000;
}

/* taskbar */
.taskbar{
    height: 32px;
    display: flex;
    align-items: stretch;
    padding-left: 5px;
    background: #909090;
    border-top: 1px solid #777;
    font: 9px/15px "Noto Sans", sans-serif;
    color: #fff;
}
.launch{
    display: flex;
    gap: 23px;
    margin-right: 13px;
}
.task_icon{
    width: 24px;
    display: flex;
    align-items: center;
    justify-content: center;
}
.task{
    width: 106px;
    margin-right: 2px;
    padding-left: 4px;
    display: flex;
    align-items: center;
    gap: 4px;
    background: #a3a3a3;
    border: 1px solid #b2b2b2;
    white-space: nowrap;
}
.task_on{
    background: #b7b7b7;
    border-color: #d6d6d6;
}
.tray{
    margin-left: auto;
    padding-right: 11px;
    display: flex;
    align-items: center;
    gap: 8px;
}
.clock{
    width: 52px;
    text-align: center;
    font-family: "Open Sans", sans-serif;
    font-size: 10px;
}
```
